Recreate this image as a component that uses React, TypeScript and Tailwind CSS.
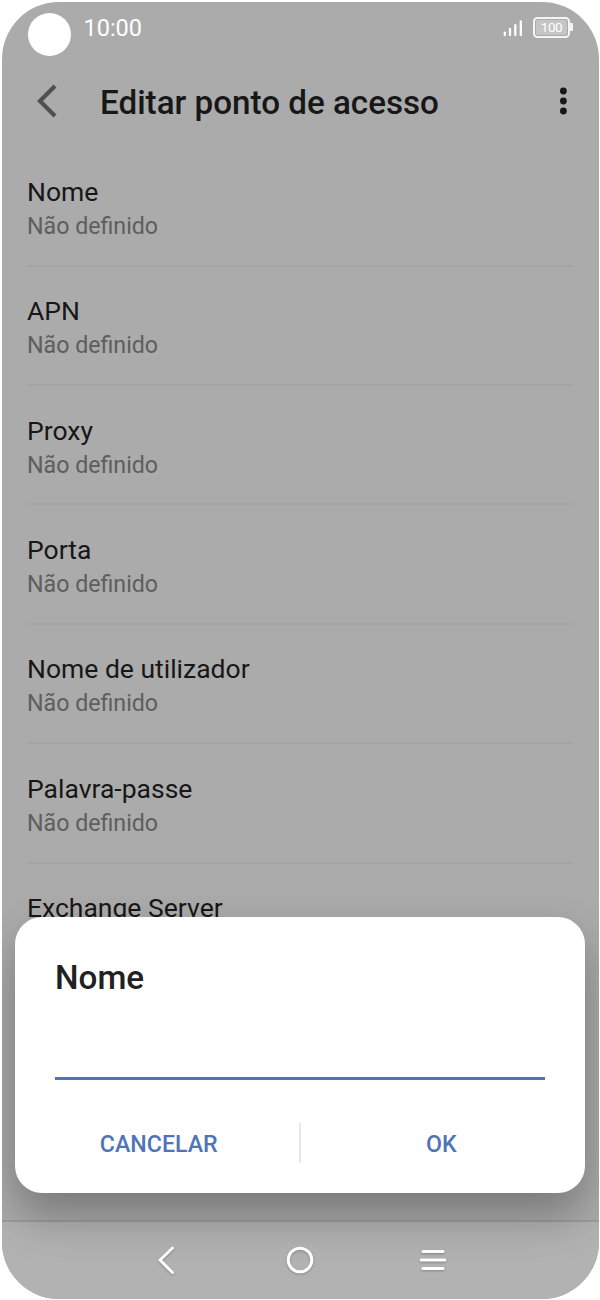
const fields = [
  { label: "Nome", value: "Não definido" },
  { label: "APN", value: "Não definido" },
  { label: "Proxy", value: "Não definido" },
  { label: "Porta", value: "Não definido" },
  { label: "Nome de utilizador", value: "Não definido" },
  { label: "Palavra-passe", value: "Não definido" },
  { label: "Exchange Server", value: "Não definido" },
];

function StatusBar() {
  return (
    <div className="flex h-[56px] shrink-0 items-start pl-[26px] pr-[26px] text-white">
      <div className="mt-[11.5px] size-[43px] shrink-0 rounded-full bg-white" />
      <span className="ml-[13px] mt-[11px] text-[23.5px] leading-[30px]">10:00</span>
      <svg className="ml-auto mt-[17.5px] h-[18px] w-[21px]" viewBox="0 0 21 18" stroke="#fff" strokeWidth="2.3" strokeLinecap="round">
        <path d="M2.8 13.7v2.3M8 10v6M13.3 6.2v9.8M18.8 2.4v13.6" />
      </svg>
      <div className="ml-[10px] mt-[15.5px] flex items-center">
        <div className="flex h-[20.5px] w-[37px] rounded-[4.5px] border-2 border-[#f4f4f4] p-px">
          <div className="flex flex-1 items-center justify-center rounded-[2px] bg-[#c5c5c5] text-[13.5px] leading-none tracking-[-0.4px]">100</div>
        </div>
        <div className="h-[8px] w-[2.5px] rounded-r-[1px] bg-[#f4f4f4]" />
      </div>
    </div>
  );
}

function Header() {
  return (
    <div className="flex h-[88px] shrink-0 items-center pl-[33px] pr-[32px]">
      <svg className="-mt-[2px] h-[34px] w-[22px] shrink-0" viewBox="0 0 22 34" fill="none" stroke="#505050" strokeWidth="4.2">
        <path d="M20 2 5 17l15 15" />
      </svg>
      <h1 className="ml-[43.5px] mt-[3px] text-[33.2px] font-medium leading-[40px] text-[#171717]">Editar ponto de acesso</h1>
      <svg className="-mt-[2px] ml-auto h-[30px] w-[8px]" viewBox="0 0 8 30" fill="#171717">
        <circle cx="4.4" cy="5" r="3.4" />
        <circle cx="4.4" cy="15" r="3.4" />
        <circle cx="4.4" cy="25" r="3.4" />
      </svg>
    </div>
  );
}

function Dialog() {
  return (
    <div className="absolute left-[13.5px] top-[915.5px] flex h-[276px] w-[570px] flex-col rounded-[27px] bg-white px-[40px] shadow-[0_22px_46px_rgba(0,0,0,0.3)]">
      <h2 className="mt-[41px] text-[33.2px] font-medium leading-[40px] text-[#212121]">Nome</h2>
      <div className="mt-[31px] h-[51px] border-b-[3px] border-[#4f74b8]" />
      <div className="mt-[43px] flex h-[40px] items-center text-[23.2px] font-medium text-[#4f74b8]">
        <button className="flex-1 pr-[36px] pt-[3px] text-center">CANCELAR</button>
        <div className="h-[40px] w-[2px] bg-[#e8e8e8]" />
        <button className="flex-1 pl-[37px] pt-[3px] text-center">OK</button>
      </div>
    </div>
  );
}

function NavBar() {
  return (
    <div className="flex h-[78.5px] shrink-0 items-center justify-between border-t-2 border-[#9c9c9c] bg-[#b2b2b2] pl-[153px] pr-[151px]">
      <svg className="h-[30px] w-[24px] drop-shadow-[0_1px_1px_rgba(0,0,0,0.25)]" viewBox="0 0 24 30" fill="none" stroke="#fff" strokeWidth="3" strokeLinecap="round" strokeLinejoin="round">
        <path d="M17.5 3 5 15l12.5 12.5" />
      </svg>
      <svg className="ml-[3px] h-[30px] w-[30px] drop-shadow-[0_1px_1px_rgba(0,0,0,0.25)]" viewBox="0 0 30 30" fill="none" stroke="#fff" strokeWidth="3">
        <circle cx="15" cy="15" r="11.8" />
      </svg>
      <svg className="h-[30px] w-[30px] drop-shadow-[0_1px_1px_rgba(0,0,0,0.25)]" viewBox="0 0 30 30" stroke="#fff" strokeWidth="3" strokeLinecap="round">
        <path d="M4.9 6.5h20.2M3.2 15h23.6M4.9 23.4h20.2" />
      </svg>
    </div>
  );
}

export default function App() {
  return (
    <div className="h-[1300px] w-[600px] bg-white p-[1.5px] font-['Roboto','Liberation_Sans',sans-serif]">
      <div className="relative flex h-full flex-col overflow-hidden rounded-[57px] bg-[#ababab]">
        <StatusBar />
        <Header />
        <div className="min-h-0 flex-1 overflow-hidden px-[25.5px] pt-[1.7px]">
          {fields.map((f) => (
            <div key={f.label} className="flex h-[119.4px] flex-col justify-start border-b-2 border-[#a4a4a4] pt-[27.7px]">
              <div className="text-[26.5px] leading-[34px] text-[#171717]">{f.label}</div>
              <div className="text-[23.2px] leading-[34px] text-[#5e5e5e]">{f.value}</div>
            </div>
          ))}
        </div>
        <NavBar />
        <Dialog />
      </div>
    </div>
  );
}
